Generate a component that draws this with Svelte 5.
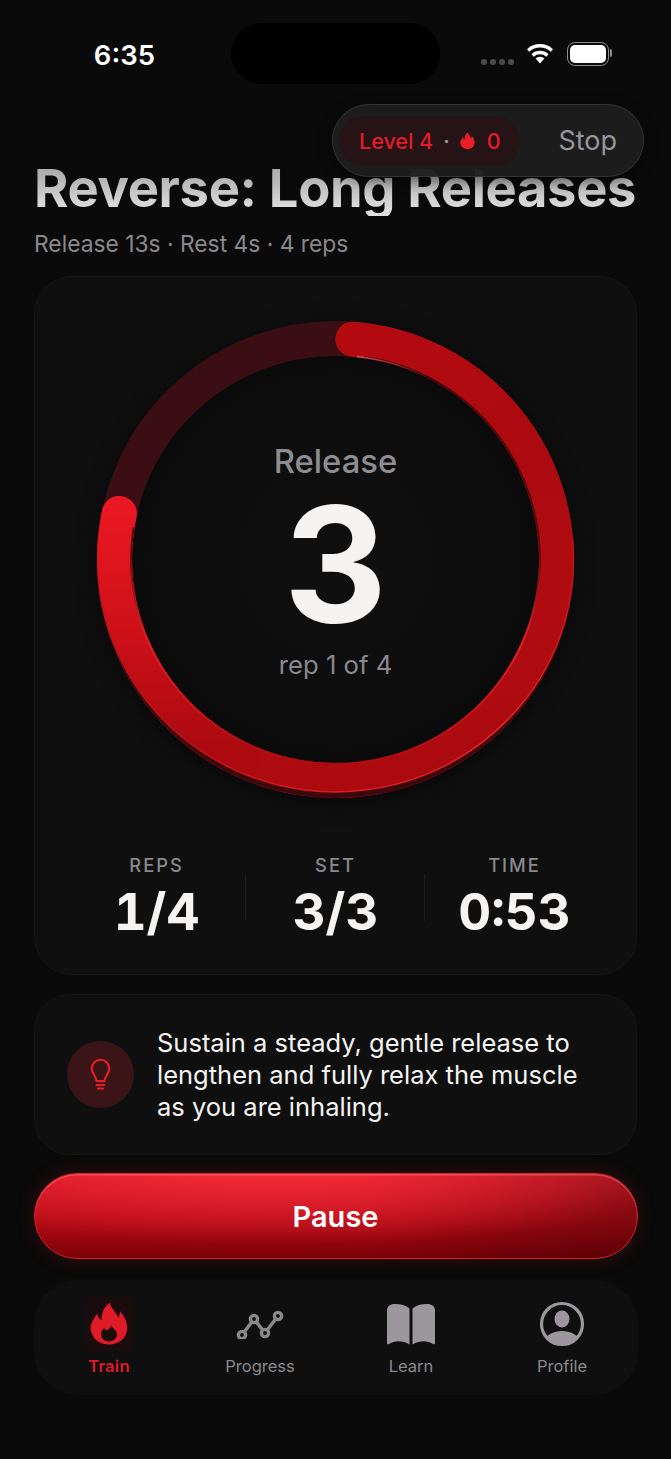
<script>
  const stats = [
    { label: 'REPS', value: '1/4' },
    { label: 'SET', value: '3/3' },
    { label: 'TIME', value: '0:53' }
  ];
  const cx = 238.5, cy = 238.5, r = 221;
  const arc = (rx, ry, from, to) => {
    const p = (deg) => {
      const a = deg * Math.PI / 180;
      return `${(cx + rx * Math.sin(a)).toFixed(2)} ${(cy - ry * Math.cos(a)).toFixed(2)}`;
    };
    return `M${p(from)} A${rx} ${ry} 0 ${to - from > 180 ? 1 : 0} 1 ${p(to)}`;
  };
  const rim = `M0 ${cy} A238.5 238.5 0 0 0 477 ${cy} A238.5 232.5 0 0 1 0 ${cy} Z`;
  const flameOuter = 'M25 1C27 9 33 13 36 20C37 17 38 15 38 12C43 18 47 25 47 33C47 45 37 54 24 54C11 54 1 45 1 33C1 26 5 21 9 15C10 19 12 22 15 23C14 14 18 6 25 1Z';
  const flameHole = 'M24 50C30 50 34 46 34 41C34 37 30 35 27 30C26 33 24 35 21 36C20 35 18 35 18 33C15 36 14 38 14 41C14 46 18 50 24 50Z';
</script>

<div class="page">
  <header class="status">
    <span class="clock">6:35</span>
    <div class="island"></div>
    <div class="sys">
      <div class="dots"><i></i><i></i><i></i><i></i></div>
      <svg class="wifi" viewBox="0 0 28 21" width="28" height="21" aria-hidden="true">
        <path d="M14 20.500 9.600 15.600a6.400 6.400 0 0 1 8.800 0Z" fill="#fff" />
        <path d="M6.600 12.400a11 11 0 0 1 14.800 0" fill="none" stroke="#fff" stroke-width="3.400" />
        <path d="M2.200 7.400a17.500 17.500 0 0 1 23.600 0" fill="none" stroke="#fff" stroke-width="3.400" />
      </svg>
      <div class="battery"><span></span></div>
    </div>
  </header>

  <div class="glass">
    <div class="chip">
      <span>Level 4</span><span class="sep">·</span>
      <svg viewBox="0 0 48 56" width="15" height="18" aria-hidden="true"><path d={flameOuter} fill="#ea1c26" /></svg>
      <span class="streak">0</span>
    </div>
    <span class="stop">Stop</span>
  </div>

  <main class="content">
    <h1>Reverse: Long Releases</h1>
    <p class="sub">Release 13s · Rest 4s · 4 reps</p>

    <section class="card timer">
      <div class="dial">
        <svg viewBox="0 0 477 480" width="477" height="480" aria-hidden="true">
          <defs>
            <linearGradient id="tail" gradientUnits="userSpaceOnUse" x1="0" y1="185" x2="0" y2="420">
              <stop offset="0" stop-color="#ea1822" />
              <stop offset="0.55" stop-color="#cc1018" />
              <stop offset="1" stop-color="#ad0a10" />
            </linearGradient>
            <linearGradient id="face" gradientUnits="userSpaceOnUse" x1="240" y1="0" x2="400" y2="470">
              <stop offset="0" stop-color="#b40a10" />
              <stop offset="0.4" stop-color="#ab0b10" />
              <stop offset="0.7" stop-color="#b00c12" />
              <stop offset="1" stop-color="#a80a0e" />
            </linearGradient>
            <linearGradient id="inner" gradientUnits="userSpaceOnUse" x1="0" y1="0" x2="0" y2="445">
              <stop offset="0" stop-color="#3a0508" />
              <stop offset="0.52" stop-color="#5a0a0e" />
              <stop offset="0.72" stop-color="#e0222a" />
              <stop offset="1" stop-color="#ad0a10" />
            </linearGradient>
            <linearGradient id="glint" gradientUnits="userSpaceOnUse" x1="255" y1="0" x2="330" y2="0">
              <stop offset="0" stop-color="#e85a60" />
              <stop offset="1" stop-color="#e85a60" stop-opacity="0" />
            </linearGradient>
            <linearGradient id="edge" gradientUnits="userSpaceOnUse" x1="477" y1="180" x2="60" y2="420">
              <stop offset="0" stop-color="#b5121a" />
              <stop offset="0.35" stop-color="#f0262e" />
              <stop offset="0.8" stop-color="#e01c24" />
              <stop offset="1" stop-color="#b5121a" />
            </linearGradient>
            <radialGradient id="well" gradientUnits="userSpaceOnUse" cx={cx} cy={cy} r="204">
              <stop offset="0" stop-color="#0f0f0f" />
              <stop offset="0.8" stop-color="#0d0d0d" />
              <stop offset="1" stop-color="#0a0a0a" />
            </radialGradient>
            <filter id="soft" x="-20%" y="-20%" width="140%" height="140%"><feGaussianBlur stdDeviation="9" /></filter>
          </defs>
          <circle cx={cx} cy={cy + 4} r={r} class="halo" filter="url(#soft)" />
          <circle cx={cx} cy={cy} r="204" fill="url(#well)" />
          <circle cx={cx} cy={cy} r={r} class="track" />
          <path d={arc(r, r, 4.5, 282)} class="progress" stroke="url(#face)" />
          <path d={arc(r, r, 205, 282)} class="progress" stroke="url(#tail)" />
          <path d={rim} class="rim" />
          <path d={arc(204.5, 204.5, 8, 279)} class="inner" stroke="url(#inner)" />
          <path d={arc(204, 204, 6, 28)} class="edge" stroke="url(#glint)" />
          <path d={arc(238, 232.5, 85, 262)} class="edge" stroke="url(#edge)" />
        </svg>
        <div class="readout">
          <span class="phase">Release</span>
          <span class="count">3</span>
          <span class="rep">rep 1 of 4</span>
        </div>
      </div>

      <div class="stats">
        {#each stats as s}
          <div class="stat">
            <span class="label">{s.label}</span>
            <span class="value">{s.value}</span>
          </div>
        {/each}
      </div>
    </section>

    <section class="card tip">
      <div class="bulb">
        <svg viewBox="0 0 24 36" width="21" height="34" aria-hidden="true" fill="none" stroke="#e81c26" stroke-width="2.400" stroke-linecap="round" stroke-linejoin="round">
          <path d="M7.500 25C7.500 20 2 16.500 2 10.500a10 10 0 0 1 20 0C22 16.500 16.500 20 16.500 25Z" />
          <path d="M7.500 29.500h9" />
          <path d="M9 33.500h6" />
        </svg>
      </div>
      <p>Sustain a steady, gentle release to lengthen and fully relax the muscle as you are inhaling.</p>
    </section>

    <button class="pause">Pause</button>

    <nav class="tabs">
      <div class="tab active">
        <div class="ico flame-wrap">
          <svg viewBox="0 0 48 56" width="38" height="46" aria-hidden="true"><path d={flameOuter + flameHole} fill="#e01b28" fill-rule="evenodd" /></svg>
        </div>
        <span>Train</span>
      </div>
      <div class="tab">
        <div class="ico">
          <svg viewBox="0 0 48 30" width="48" height="30" aria-hidden="true" fill="none" stroke="#8c898d" stroke-width="3.400">
            <path d="M6 26 18 10l11 14L42 7" />
            <circle cx="6" cy="26" r="3.600" fill="#0f0f0f" />
            <circle cx="18" cy="10" r="3.600" fill="#0f0f0f" />
            <circle cx="29" cy="24" r="3.600" fill="#0f0f0f" />
            <circle cx="42" cy="7" r="3.600" fill="#0f0f0f" />
          </svg>
        </div>
        <span>Progress</span>
      </div>
      <div class="tab">
        <div class="ico">
          <svg viewBox="0 0 50 46" width="50" height="42" preserveAspectRatio="none" aria-hidden="true" fill="#9b979c">
            <path d="M23.500 6C20 2.500 15 1 9 1 4 1 1 3.500 1 8v36c0 1 1 1.500 2 1 3-2 6-3 9-3 4 0 8 1 11.500 3.500Z" />
            <path d="M26.500 6C30 2.500 35 1 41 1c5 0 8 2.500 8 7v36c0 1-1 1.500-2 1-3-2-6-3-9-3-4 0-8 1-11.500 3.500Z" />
          </svg>
        </div>
        <span>Learn</span>
      </div>
      <div class="tab">
        <div class="ico">
          <svg viewBox="0 0 46 46" width="46" height="46" aria-hidden="true">
            <defs><clipPath id="disc"><circle cx="23" cy="23" r="20" /></clipPath></defs>
            <circle cx="23" cy="23" r="20.500" fill="none" stroke="#9b979c" stroke-width="3.200" />
            <ellipse cx="23" cy="18" rx="7.500" ry="8.500" fill="#9b979c" />
            <ellipse cx="23" cy="42" rx="18" ry="12" fill="#9b979c" clip-path="url(#disc)" />
          </svg>
        </div>
        <span>Profile</span>
      </div>
    </nav>
  </main>
</div>

<style>
  :global(body) {
    margin: 0;
    background: #0a0a0a;
  }
  .page {
    position: relative;
    width: 671px;
    height: 1459px;
    overflow: hidden;
    background: #0a0a0a;
    font-family: Inter, "Liberation Sans", sans-serif;
    color: #f5f4f2;
  }
  .status {
    display: grid;
    grid-template-columns: 231px 209px 1fr;
    align-items: center;
    height: 61px;
    padding-top: 23px;
  }
  .clock {
    justify-self: end;
    margin: 2px 76px 0 0;
    font-size: 27.500px;
    font-weight: 600;
    color: #fff;
  }
  .island {
    height: 61px;
    border-radius: 31px;
    background: #000;
  }
  .sys {
    display: flex;
    align-items: center;
    margin-left: 41px;
  }
  .dots {
    display: flex;
    gap: 3.500px;
    margin: 17px 12px 0 0;
  }
  .dots i {
    width: 5.500px;
    height: 5.500px;
    border-radius: 50%;
    background: #4a4a4a;
  }
  .wifi {
    margin-right: 13px;
  }
  .battery {
    position: relative;
    box-sizing: border-box;
    width: 42px;
    height: 24px;
    padding: 2px;
    border: 1.500px solid #8f8f8f;
    border-radius: 8px;
  }
  .battery::after {
    content: '';
    position: absolute;
    top: 6px;
    right: -4.500px;
    width: 2.500px;
    height: 8px;
    border-radius: 0 2px 2px 0;
    background: #8f8f8f;
  }
  .battery span {
    display: block;
    height: 100%;
    border-radius: 5px;
    background: #fff;
  }
  .glass {
    position: absolute;
    z-index: 2;
    top: 104px;
    left: 332px;
    box-sizing: border-box;
    display: flex;
    align-items: center;
    width: 312px;
    height: 73px;
    padding: 0 26px 0 6px;
    border: 1.500px solid #343434;
    border-radius: 37px;
    background: rgba(29, 29, 30, 0.96);
    box-shadow: 0 4px 14px rgba(0, 0, 0, 0.5);
  }
  .chip {
    display: flex;
    align-items: center;
    box-sizing: border-box;
    width: 181px;
    height: 50px;
    padding-left: 20px;
    border-radius: 25px;
    background: #261315;
    color: #e21d29;
    font-size: 21.500px;
    font-weight: 500;
  }
  .sep {
    margin: 0 10px;
    color: #a0a0a0;
  }
  .streak {
    margin-left: 12px;
  }
  .stop {
    margin-left: auto;
    font-size: 27px;
    color: #97959a;
  }
  .content {
    padding: 0 34px;
  }
  h1 {
    margin: 0;
    padding-top: 76px;
    font-size: 52.500px;
    line-height: 56px;
    font-weight: 700;
    letter-spacing: -0.350px;
    white-space: nowrap;
    background: linear-gradient(180deg, #9f9f9f 70px, #b5b5b5 95px, #dedede 125px);
    -webkit-background-clip: text;
    background-clip: text;
    color: transparent;
  }
  .sub {
    margin: 14px 0 0;
    font-size: 22.800px;
    line-height: 28px;
    color: #8a898e;
  }
  .card {
    box-sizing: border-box;
    border: 1px solid #161616;
    background: #0f0f0f;
  }
  .timer {
    margin-top: 18px;
    height: 699px;
    border-radius: 38px;
  }
  .dial {
    position: relative;
    width: 477px;
    height: 480px;
    margin: 44px auto 0;
  }
  .dial svg {
    display: block;
    overflow: visible;
  }
  .halo {
    fill: none;
    stroke: #000;
    stroke-width: 46;
    opacity: 0.35;
  }
  .track {
    fill: none;
    stroke: #3a0e12;
    stroke-width: 35;
  }
  .rim {
    fill: #3d080c;
  }
  .progress {
    fill: none;
    stroke-width: 35;
    stroke-linecap: round;
  }
  .inner {
    fill: none;
    stroke-width: 1.800;
  }
  .edge {
    fill: none;
    stroke-width: 1.500;
    opacity: 0.9;
  }
  .readout {
    position: absolute;
    inset: 0;
    display: flex;
    flex-direction: column;
    align-items: center;
  }
  .phase {
    margin-top: 121px;
    font-size: 32.800px;
    line-height: 39px;
    font-weight: 500;
    color: #8e8d92;
  }
  .count {
    margin-top: 21px;
    font-size: 160px;
    line-height: 125px;
    font-weight: 700;
    color: #f5f4f2;
  }
  .rep {
    margin-top: 23px;
    font-size: 25.700px;
    line-height: 30px;
    color: #8a898e;
  }
  .stats {
    display: grid;
    grid-template-columns: repeat(3, 179px);
    justify-content: center;
    margin-top: 53px;
  }
  .stat {
    position: relative;
    display: flex;
    flex-direction: column;
    align-items: center;
  }
  .stat + .stat::before {
    content: '';
    position: absolute;
    left: -1px;
    top: 20px;
    height: 47px;
    width: 1px;
    background: #1c1c1c;
  }
  .label {
    font-size: 18.300px;
    line-height: 22px;
    font-weight: 500;
    letter-spacing: 2px;
    color: #8a898e;
  }
  .value {
    margin-top: 8px;
    font-size: 51px;
    line-height: 56px;
    font-weight: 700;
    font-variant-numeric: tabular-nums;
    color: #f5f4f2;
  }
  .tip {
    display: flex;
    align-items: center;
    gap: 23px;
    margin-top: 19px;
    height: 161px;
    padding: 0 32px;
    border-radius: 36px;
  }
  .bulb {
    flex: none;
    display: grid;
    place-items: center;
    width: 67px;
    height: 67px;
    border-radius: 50%;
    background: #3b1418;
  }
  .tip p {
    margin: 0;
    font-size: 25.500px;
    line-height: 32px;
    color: #f5f4f2;
  }
  .pause {
    display: block;
    width: calc(100% + 1px);
    height: 86px;
    margin: 18px 0 0 -0.500px;
    border: 1px solid #d8202a;
    border-radius: 43px;
    background:
      radial-gradient(ellipse 70% 90% at 40% -5%, rgba(255, 50, 65, 0.75), rgba(255, 50, 65, 0) 100%),
      linear-gradient(90deg, rgba(0, 0, 0, 0) 55%, rgba(0, 0, 0, 0.28) 100%),
      linear-gradient(180deg, #d81824 0%, #b30a14 55%, #7b0007 100%);
    box-shadow: inset 0 1.500px 0 rgba(255, 150, 150, 0.4), 0 0 18px rgba(190, 10, 20, 0.25);
    color: #fff;
    font: 600 29px Inter, "Liberation Sans", sans-serif;
  }
  .tabs {
    display: grid;
    grid-template-columns: repeat(4, 151px);
    box-sizing: border-box;
    height: 115px;
    margin: 21px -0.500px 0;
    border-radius: 44px;
    background: #0f0f0f;
  }
  .tab {
    display: flex;
    flex-direction: column;
    align-items: center;
    padding-top: 17px;
    font-size: 16.500px;
    color: #8a898e;
  }
  .tab span {
    margin-top: 3px;
    line-height: 24px;
  }
  .tab.active {
    color: #e01b28;
    font-weight: 600;
    letter-spacing: 0.300px;
  }
  .ico {
    display: grid;
    place-items: center;
    width: 54px;
    height: 54px;
  }
  .flame-wrap {
    width: 46px;
    background: #1c0b0d;
  }
</style>
